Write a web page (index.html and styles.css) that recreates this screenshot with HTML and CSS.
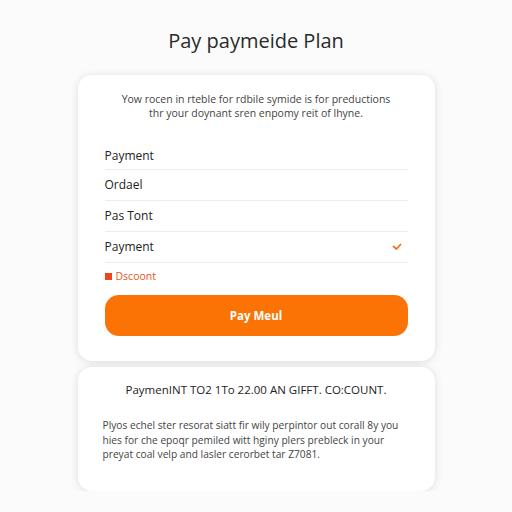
FILE: index.html
```html
<!DOCTYPE html>
<html lang="en">
<head>
  <meta charset="UTF-8">
  <title>Pay paymeide Plan</title>
  <link rel="stylesheet" href="styles.css">
</head>
<body>
  <h1 class="title">Pay paymeide Plan</h1>

  <div class="card plan-card">
    <p class="intro">Yow rocen in rteble for rdbile symide is for preductions<br>thr your doynant sren enpomy reit of lhyne.</p>

    <ul class="options">
      <li class="option">Payment</li>
      <li class="option">Ordael</li>
      <li class="option">Pas Tont</li>
      <li class="option selected">
        <span>Payment</span>
        <svg class="check" width="10" height="8" viewBox="0 0 10 8">
          <path d="M1.5 3.5 L4.5 6 L8.5 1.5" fill="none" stroke="#f2711c" stroke-width="1.8" stroke-linecap="round" stroke-linejoin="round"/>
        </svg>
      </li>
    </ul>

    <div class="discount"><span class="dot"></span>Dscoont</div>

    <button class="pay-btn" type="button">Pay Meul</button>
  </div>

  <div class="card summary-card">
    <h3 class="summary-title">PaymenINT TO2 1To 22.00 AN GIFFT. CO:COUNT.</h3>
    <p class="summary-text">Plyos echel ster resorat siatt fir wily perpintor out corall 8y you hies for che epoqr pemiled witt hginy plers prebleck in your preyat coal velp and lasler cerorbet tar Z7081.</p>
  </div>
</body>
</html>
```

FILE: styles.css
```css
body {
  font-family: "Open Sans", "Liberation Sans", sans-serif;
  background-color: #fbfbfb;
  margin: 0;
  padding: 24px 0 0;
  display: flex;
  flex-direction: column;
  align-items: center;
  color: #333;
}
.title {
  font-size: 20px;
  font-weight: 400;
  margin: 3px 0 20px;
  color: #2b2b2b;
  line-height: 28px;
}
.card {
  background-color: #fff;
  width: 357px;
  box-sizing: border-box;
  border-radius: 14px;
  box-shadow: 0 1px 8px rgba(0, 0, 0, 0.12);
}
.plan-card {
  padding: 15px 27px 25px;
}
.intro {
  font-size: 10.5px;
  line-height: 14px;
  text-align: center;
  color: #444;
  margin: 2px 0 23px;
}
.options {
  list-style: none;
  margin: 0;
  padding: 0;
}
.option {
  font-size: 12px;
  color: #222;
  height: 30px;
  line-height: 30px;
  border-bottom: 1.5px solid #ececec;
  display: flex;
  justify-content: space-between;
  align-items: center;
  padding-right: 6px;
}
.option:first-child {
  height: 26px;
  line-height: 26px;
}
.discount {
  font-size: 10.5px;
  color: #e8541c;
  margin-top: 6px;
  display: flex;
  align-items: center;
}
.dot {
  width: 7px;
  height: 7px;
  background-color: #f0441a;
  margin-right: 4px;
}
.pay-btn {
  display: block;
  width: 100%;
  height: 41px;
  margin-top: 12px;
  border: none;
  border-radius: 14px;
  background-color: #fb7305;
  color: #fff;
  font-family: inherit;
  font-size: 11.5px;
  font-weight: 700;
}
.summary-card {
  margin-top: 6px;
  padding: 15px 25px 30px;
  height: 124px;
}
.summary-title {
  font-size: 11.5px;
  font-weight: 400;
  text-align: center;
  color: #222;
  margin: 0 0 21px;
}
.summary-text {
  font-size: 10.2px;
  line-height: 14.5px;
  color: #444;
  margin: 0;
}
```
